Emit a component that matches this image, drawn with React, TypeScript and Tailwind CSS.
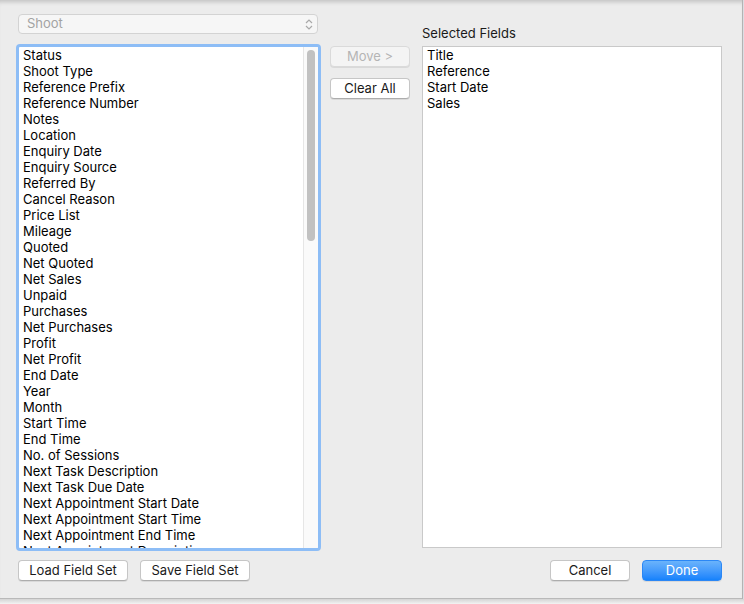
import React from 'react';

const fields = [
  'Status',
  'Shoot Type',
  'Reference Prefix',
  'Reference Number',
  'Notes',
  'Location',
  'Enquiry Date',
  'Enquiry Source',
  'Referred By',
  'Cancel Reason',
  'Price List',
  'Mileage',
  'Quoted',
  'Net Quoted',
  'Net Sales',
  'Unpaid',
  'Purchases',
  'Net Purchases',
  'Profit',
  'Net Profit',
  'End Date',
  'Year',
  'Month',
  'Start Time',
  'End Time',
  'No. of Sessions',
  'Next Task Description',
  'Next Task Due Date',
  'Next Appointment Start Date',
  'Next Appointment Start Time',
  'Next Appointment End Time',
  'Next Appointment Description',
];

const selected = ['Title', 'Reference', 'Start Date', 'Sales'];

function Button({ label, width, disabled }: { label: string; width: string; disabled?: boolean }) {
  return (
    <button
      className={`${width} h-[21px] rounded-[4px] border text-[13px] leading-none shadow-[0_1px_0_rgba(0,0,0,0.08)] ${
        disabled
          ? 'border-[#dadada] bg-[#f4f4f4] text-[#b4b4b4]'
          : 'border-[#c6c6c6] border-b-[#adadad] bg-white text-[#1a1a1a]'
      }`}
    >
      {label}
    </button>
  );
}

export default function App() {
  return (
    <div
      className="w-[744px] h-[604px] flex flex-col bg-[#f3f3f3] overflow-hidden"
      style={{ fontFamily: 'Inter, "Liberation Sans", Arial, sans-serif' }}
    >
      <div className="flex h-[599px]">
        <div className="w-[742px] h-full flex flex-col bg-[#ececec] border-b border-[#b9b9b9] shadow-[inset_0_5px_4px_-3px_rgba(0,0,0,0.18)]">
          <div className="flex pt-[14px] pl-[16px]">
            {/* left column */}
            <div className="flex flex-col w-[305px]">
              <div className="ml-[2px] w-[300px] h-[20px] rounded-[4px] border border-[#d3d3d3] bg-[#f6f6f6] flex items-center justify-between pl-[8px] pr-[4px]">
                <span className="text-[13px] text-[#a3a3a3]">Shoot</span>
                <svg width="8" height="13" viewBox="0 0 8 13" fill="none" stroke="#a9a9a9" strokeWidth="1.2">
                  <path d="M1 5 L4 2 L7 5" />
                  <path d="M1 8 L4 11 L7 8" />
                </svg>
              </div>
              <div className="mt-[10px] w-[305px] h-[507px] rounded-[4px] border-[3px] border-[#8dbdf6] bg-white flex overflow-hidden">
                <div className="flex-1 pl-[4px] overflow-hidden">
                  {fields.map((f) => (
                    <div key={f} className="h-[16px] text-[13px] leading-[16px] text-black whitespace-nowrap">
                      {f}
                    </div>
                  ))}
                </div>
                <div className="w-[15px] h-full border-l border-[#e6e6e6] bg-[#fafafa] pt-[3px] flex justify-center">
                  <div className="w-[8px] h-[191px] rounded-full bg-[#c1c1c1]" />
                </div>
              </div>
            </div>

            {/* middle buttons */}
            <div className="flex flex-col ml-[9px] pt-[32px] gap-[11px]">
              <Button label="Move >" width="w-[80px]" disabled />
              <Button label="Clear All" width="w-[80px]" />
            </div>

            {/* right column */}
            <div className="flex flex-col ml-[12px]">
              <div className="h-[32px] pt-[11px] text-[13px] leading-[16px] text-[#1a1a1a]">Selected Fields</div>
              <div className="w-[300px] h-[502px] border border-[#c9c9c9] bg-white pl-[4px]">
                {selected.map((f) => (
                  <div key={f} className="h-[16px] text-[13px] leading-[16px] text-black">
                    {f}
                  </div>
                ))}
              </div>
            </div>
          </div>

          {/* bottom bar */}
          <div className="flex items-center pl-[18px] pr-[20px] mt-[9px]">
            <div className="flex gap-[12px]">
              <Button label="Load Field Set" width="w-[110px]" />
              <Button label="Save Field Set" width="w-[110px]" />
            </div>
            <div className="flex gap-[12px] ml-auto">
              <Button label="Cancel" width="w-[80px]" />
              <button className="w-[80px] h-[21px] rounded-[4px] border border-[#2b87f5] bg-gradient-to-b from-[#6ab3fb] to-[#1482fc] text-[13px] leading-none text-white shadow-[0_1px_0_rgba(0,0,0,0.08)]">
                Done
              </button>
            </div>
          </div>
        </div>
        <div className="w-[2px] h-full border-l border-[#b3b3b3] bg-[#dcdde3]" />
      </div>
      <div className="flex-1 bg-gradient-to-b from-[#d4d4d4] to-[#f3f3f3]" />
    </div>
  );
}
